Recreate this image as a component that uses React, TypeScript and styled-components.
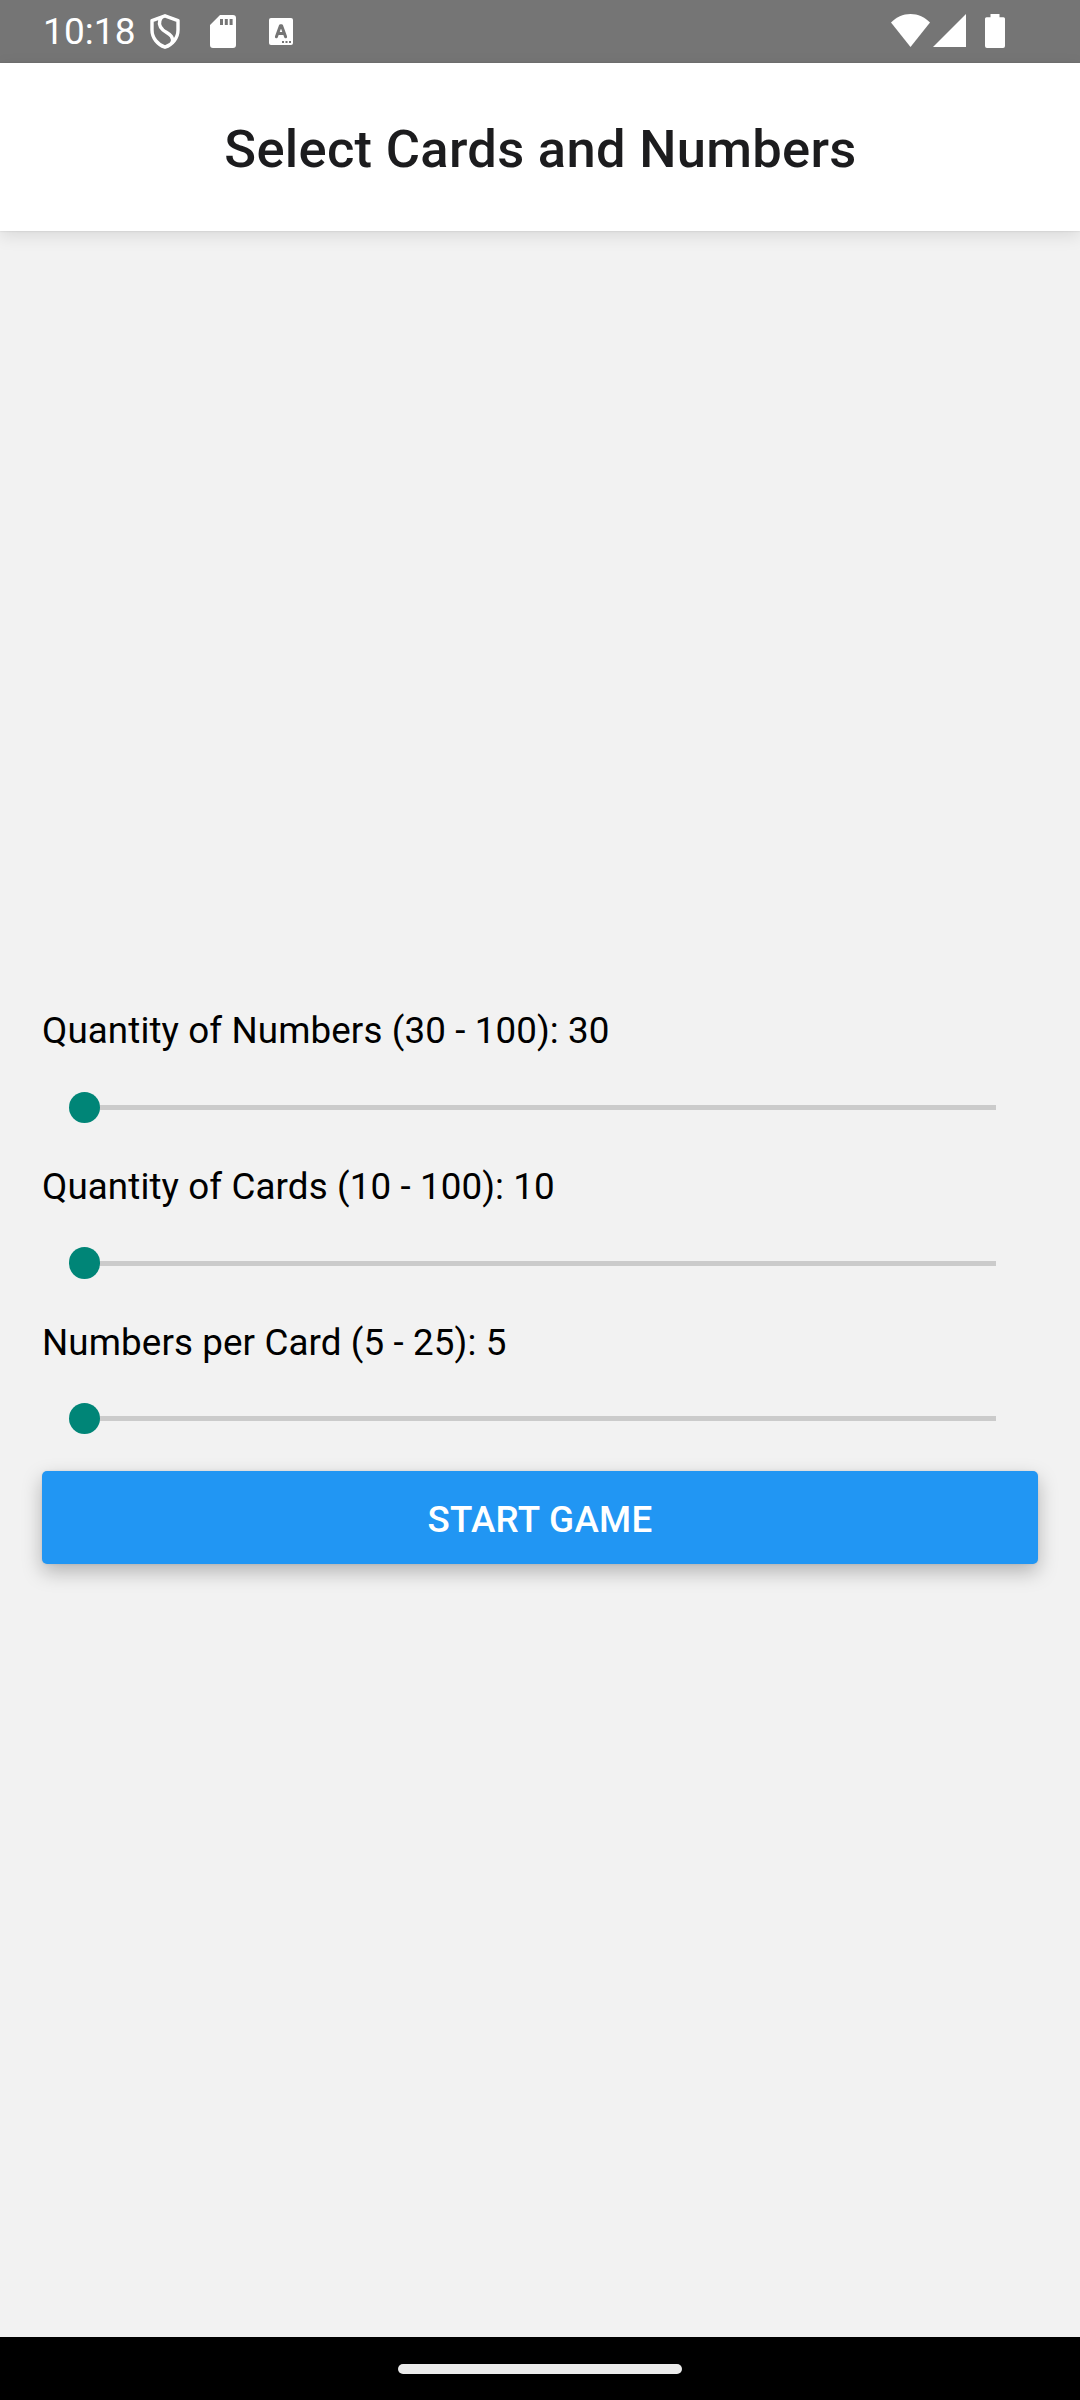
import React, { useState } from "react";
import styled, { createGlobalStyle } from "styled-components";

const GlobalStyle = createGlobalStyle`
  * { box-sizing: border-box; }
  body { margin: 0; background: #f2f2f2; font-family: Roboto, sans-serif; }
`;

const Screen = styled.div`
  display: flex;
  flex-direction: column;
  width: 1080px;
  height: 2400px;
  background: #f2f2f2;
`;

const StatusBar = styled.div`
  display: flex;
  justify-content: space-between;
  height: 63px;
  padding: 0 75px 0 43px;
  background: #757575;
  color: #fff;
`;

const StatusGroup = styled.div`
  display: flex;
  align-items: flex-start;
`;

const Clock = styled.span`
  width: 107px;
  padding-top: 10px;
  font-size: 37px;
  line-height: 44px;
  letter-spacing: 0.1px;
  white-space: nowrap;
`;

const Glyph = styled.svg<{ $top: number; $left?: number }>`
  display: block;
  flex: none;
  margin-top: ${(p) => p.$top}px;
  margin-left: ${(p) => p.$left ?? 0}px;
`;

const Header = styled.header`
  display: flex;
  align-items: center;
  justify-content: center;
  height: 168px;
  padding: 4px 0 0 1px;
  background: #fff;
  box-shadow: 0 0 2px rgba(0, 0, 0, 0.14), 0 5px 16px rgba(0, 0, 0, 0.1);
`;

const Title = styled.h1`
  margin: 0;
  font-size: 52.5px;
  line-height: 62px;
  font-weight: 500;
  letter-spacing: 0.3px;
  color: #1c1c1e;
  white-space: nowrap;
`;

const Main = styled.main`
  flex: 1;
  display: flex;
  flex-direction: column;
  justify-content: center;
  padding: 0.8px 42px 0;
`;

const Field = styled.label`
  display: block;
  height: 155.67px;
`;

const Caption = styled.span`
  display: block;
  height: 50.5px;
  font-size: 36.75px;
  line-height: 53px;
  letter-spacing: 0.11px;
  color: #000;
  white-space: nowrap;
`;

const Range = styled.input`
  appearance: none;
  display: block;
  width: 943px;
  height: 105px;
  margin: 0 0 0 26.5px;
  background: linear-gradient(#cbcbcb, #cbcbcb) center / 912px 5px no-repeat;
  outline: none;

  &::-webkit-slider-thumb {
    appearance: none;
    width: 31.5px;
    height: 31.5px;
    border-radius: 50%;
    background: #008577;
  }
`;

const StartButton = styled.button`
  height: 93px;
  padding: 5px 0 0;
  border: 0;
  border-radius: 5px;
  background: #2196f3;
  box-shadow: 0 0 3px rgba(0, 0, 0, 0.08), 0 8px 20px rgba(0, 0, 0, 0.26);
  color: #fff;
  font-family: inherit;
  font-size: 36.75px;
  font-weight: 500;
  line-height: 44px;
  letter-spacing: 0.3px;
`;

const NavigationBar = styled.div`
  display: flex;
  justify-content: center;
  height: 63px;
  padding-top: 27px;
  background: #000;
`;

const HomePill = styled.div`
  width: 284px;
  height: 10px;
  border-radius: 5px;
  background: #ebebeb;
`;

function QuantityField(props: { name: string; min: number; max: number }) {
  const [value, setValue] = useState(props.min);
  return (
    <Field>
      <Caption>{`${props.name} (${props.min} - ${props.max}): ${value}`}</Caption>
      <Range
        type="range"
        min={props.min}
        max={props.max}
        value={value}
        onChange={(e) => setValue(Number(e.target.value))}
      />
    </Field>
  );
}

export default function App() {
  return (
    <>
      <GlobalStyle />
      <Screen>
        <StatusBar>
          <StatusGroup>
            <Clock>10:18</Clock>
            <Glyph $top={14} width="30" height="35" viewBox="0 0 30 35" fill="none" stroke="#fff">
              <path
                d="M15 1.8 L28 6.6 V16 C28 24 22.5 30.5 15 33.2 C7.5 30.5 2 24 2 16 V6.6 Z"
                strokeWidth="3.4"
                strokeLinejoin="round"
              />
              <path d="M11.6 3 C8.2 8 9.2 12.6 13 16 C17 19.4 24.6 21 22 29" strokeWidth="3.4" />
            </Glyph>
            <Glyph $top={15} $left={30} width="26" height="33" viewBox="0 0 26 33">
              <path
                fill="#fff"
                fillRule="evenodd"
                d="M10 0H23Q26 0 26 3V30Q26 33 23 33H3Q0 33 0 30V10ZM10 4V10H13V4ZM14.8 4V10H17.8V4ZM19.6 4V10H22.6V4Z"
              />
            </Glyph>
            <Glyph $top={18} $left={33} width="24" height="27" viewBox="0 0 24 27">
              <rect width="24" height="27" rx="2" fill="#fff" />
              <path
                d="M7.4 18.8 L11.4 7.8 H12.6 L16.6 18.8 M9 15.5 H15"
                fill="none"
                stroke="#757575"
                strokeWidth="3"
                strokeLinecap="round"
                strokeLinejoin="round"
              />
              <path d="M13 23h2v2h-2zM16.5 23h2v2h-2zM20 23h2v2h-2z" fill="#757575" />
            </Glyph>
          </StatusGroup>
          <StatusGroup>
            <Glyph $top={14} width="39" height="33" viewBox="0 0 39 33">
              <path fill="#fff" d="M0 8.6C5 3.2 12 0 19.5 0S34 3.2 39 8.6L19.5 33Z" />
            </Glyph>
            <Glyph $top={14} $left={3} width="33" height="33" viewBox="0 0 33 33">
              <path fill="#fff" d="M33 0V33H0Z" />
            </Glyph>
            <Glyph $top={14} $left={19} width="20" height="34" viewBox="0 0 20 34">
              <path fill="#fff" d="M5.5 0H14.5V3.2H18.5Q20 3.2 20 4.7V32Q20 34 18 34H2Q0 34 0 32V4.7Q0 3.2 1.5 3.2H5.5Z" />
            </Glyph>
          </StatusGroup>
        </StatusBar>
        <Header>
          <Title>Select Cards and Numbers</Title>
        </Header>
        <Main>
          <QuantityField name="Quantity of Numbers" min={30} max={100} />
          <QuantityField name="Quantity of Cards" min={10} max={100} />
          <QuantityField name="Numbers per Card" min={5} max={25} />
          <StartButton type="button">START GAME</StartButton>
        </Main>
        <NavigationBar>
          <HomePill />
        </NavigationBar>
      </Screen>
    </>
  );
}
